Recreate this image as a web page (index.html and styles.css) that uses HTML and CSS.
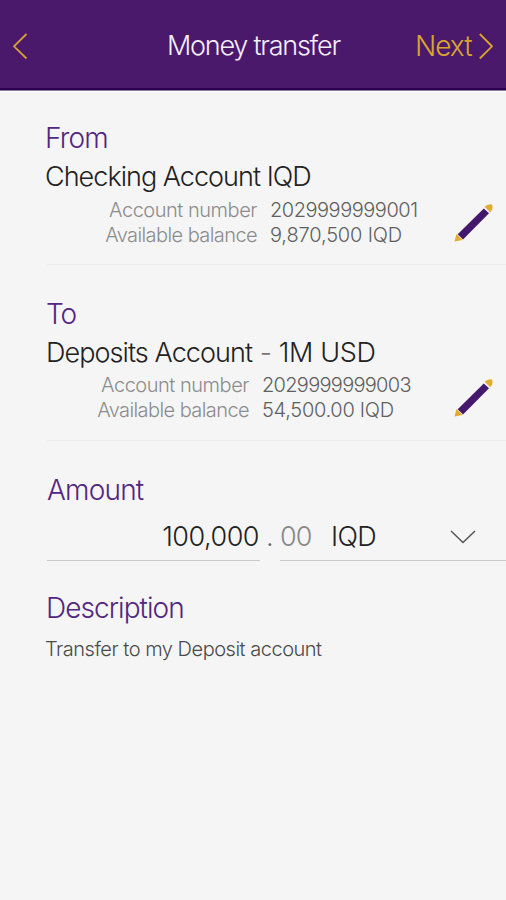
FILE: index.html
```html
<!DOCTYPE html>
<html lang="en">
<head>
<meta charset="utf-8">
<title>Money transfer</title>
<link rel="stylesheet" href="styles.css">
</head>
<body>
<header class="bar">
  <svg class="back" width="16" height="28" viewBox="0 0 16 28"><path d="M14.5 2 2 14.3 14.5 26.5"/></svg>
  <h1 class="title">Money transfer</h1>
  <div class="next"><span>Next</span><svg width="16" height="28" viewBox="0 0 16 28"><path d="M1.8 2 14 14.3 1.8 26.5"/></svg></div>
</header>
<main>
  <section class="account">
    <h2 class="label from">From</h2>
    <div class="name checking">Checking Account IQD</div>
    <dl class="details">
      <dt class="num">Account number</dt><dd class="digits">2029999999001</dd>
      <dt class="avail">Available balance</dt><dd class="balance">9,870,500 IQD</dd>
    </dl>
    <svg class="pencil" width="42" height="42" viewBox="0 0 42 42"><path class="gold" d="m2.5 39.5 2-7.5 6 6Z"/><path class="body" d="M5.7 32.2 31.8 6.4 37 11.2 11 37.5Z"/><path class="gold" d="M32.6 4.8Q36 1.5 40 2.5 41.5 7 38.3 10.2Z"/></svg>
  </section>
  <hr class="rule">
  <section class="account second">
    <h2 class="label to">To</h2>
    <div class="name deposits">Deposits Account <span class="dash">-</span> <span class="kind">1M USD</span></div>
    <dl class="details">
      <dt class="num">Account number</dt><dd class="digits">2029999999003</dd>
      <dt class="avail">Available balance</dt><dd class="balance">54,500.00 IQD</dd>
    </dl>
    <svg class="pencil" width="42" height="42" viewBox="0 0 42 42"><path class="gold" d="m2.5 39.5 2-7.5 6 6Z"/><path class="body" d="M5.7 32.2 31.8 6.4 37 11.2 11 37.5Z"/><path class="gold" d="M32.6 4.8Q36 1.5 40 2.5 41.5 7 38.3 10.2Z"/></svg>
  </section>
  <hr class="rule">
  <section class="amount">
    <h2 class="label amt">Amount</h2>
    <div class="fields">
      <div class="whole">100,000</div>
      <div class="point">.</div>
      <div class="currency"><span class="cents">00</span><span class="code">IQD</span>
        <svg class="chevron" width="28" height="16" viewBox="0 0 28 16"><path d="M2 2 14 13.5 26 2"/></svg>
      </div>
    </div>
  </section>
  <section class="description">
    <h2 class="label desc">Description</h2>
    <p class="note">Transfer to my Deposit account</p>
  </section>
</main>
</body>
</html>
```
FILE: styles.css
```css
* { box-sizing: border-box; margin: 0; padding: 0; }
body {
  height: 900px;
  overflow: hidden;
  background: #f5f5f5;
  color: #222;
  font-family: Inter, "Liberation Sans", sans-serif;
  font-weight: 300;
  white-space: nowrap;
}
h1, h2 { font-weight: 300; }
svg { fill: none; flex: none; }
.bar {
  display: grid;
  grid-template-columns: 167px 248px 1fr;
  align-items: center;
  height: 91px;
  padding-top: 2px;
  background: #4a196b;
  border-bottom: 1px solid #887a9a;
  box-shadow: inset 0 -2px #2c0052, 0 1px #fff;
}
.back { margin-left: 12px; stroke: #d3a032; stroke-width: 1.8; }
.title { font-size: 27px; line-height: 40px; letter-spacing: -1.25px; color: #f5effa; }
.next { display: flex; align-items: center; color: #d8a52e; font-size: 28px; line-height: 40px; letter-spacing: -1px; }
.next span { width: 63px; }
.next svg { stroke: #d8a52e; stroke-width: 1.8; }
main { padding-top: 27px; }
.account {
  position: relative;
  height: 146px;
  margin-left: 45px;
  padding-top: 1px;
}
.rule { margin-left: 47px; border: 0; border-top: 1px solid #ebebeb; }
.second { margin: 29px 0 0 46px; }
.label { font-size: 28px; line-height: 39px; color: #53267f; }
.name { font-size: 27px; line-height: 39px; }
.from { letter-spacing: -0.8px; }
.checking { line-height: 38px; letter-spacing: -0.98px; }
.to { letter-spacing: -1px; }
.deposits { line-height: 38px; letter-spacing: -0.93px; }
.dash { color: #777; margin: 0 1px; }
.kind { letter-spacing: -0.35px; }
.details {
  display: grid;
  grid-template-columns: 212px auto;
  column-gap: 13px;
  margin-top: 2px;
  font-size: 20px;
  line-height: 25px;
}
.second .details { grid-template-columns: 203px auto; margin-top: 1px; }
.details dt { text-align: right; color: #8c8c8c; }
.details dd { color: #606060; }
.num { letter-spacing: -0.47px; }
.avail { letter-spacing: -0.58px; }
.digits { letter-spacing: -0.47px; }
.balance { letter-spacing: -0.15px; }
.second .digits { letter-spacing: -0.7px; }
.second .balance { letter-spacing: -0.28px; }
.pencil { position: absolute; left: 407px; top: 84px; }
.second .pencil { left: 406px; top: 83px; }
.gold { fill: #e1ac2f; }
.body { fill: #43186d; }
.amount { margin: 30px 0 0 47px; }
.amt { letter-spacing: -0.8px; }
.fields { display: flex; height: 51px; font-size: 27px; line-height: 54px; }
.whole { width: 213px; padding-right: 1px; text-align: right; border-bottom: 1px solid #c9c9c9; letter-spacing: -0.5px; }
.point { width: 20px; padding-left: 6px; color: #666; }
.currency { display: flex; flex: 1; border-bottom: 1px solid #c9c9c9; letter-spacing: -1px; }
.cents { width: 51px; color: #888; }
.code { width: 118px; letter-spacing: -0.7px; }
.chevron { margin-top: 19px; stroke: #555; stroke-width: 1.5; }
.description { margin: 28px 0 0 45px; }
.desc { padding-left: 1px; letter-spacing: -0.95px; }
.note { margin-top: 9px; font-size: 20px; line-height: 25px; letter-spacing: -0.48px; color: #4a4a4a; }
```
